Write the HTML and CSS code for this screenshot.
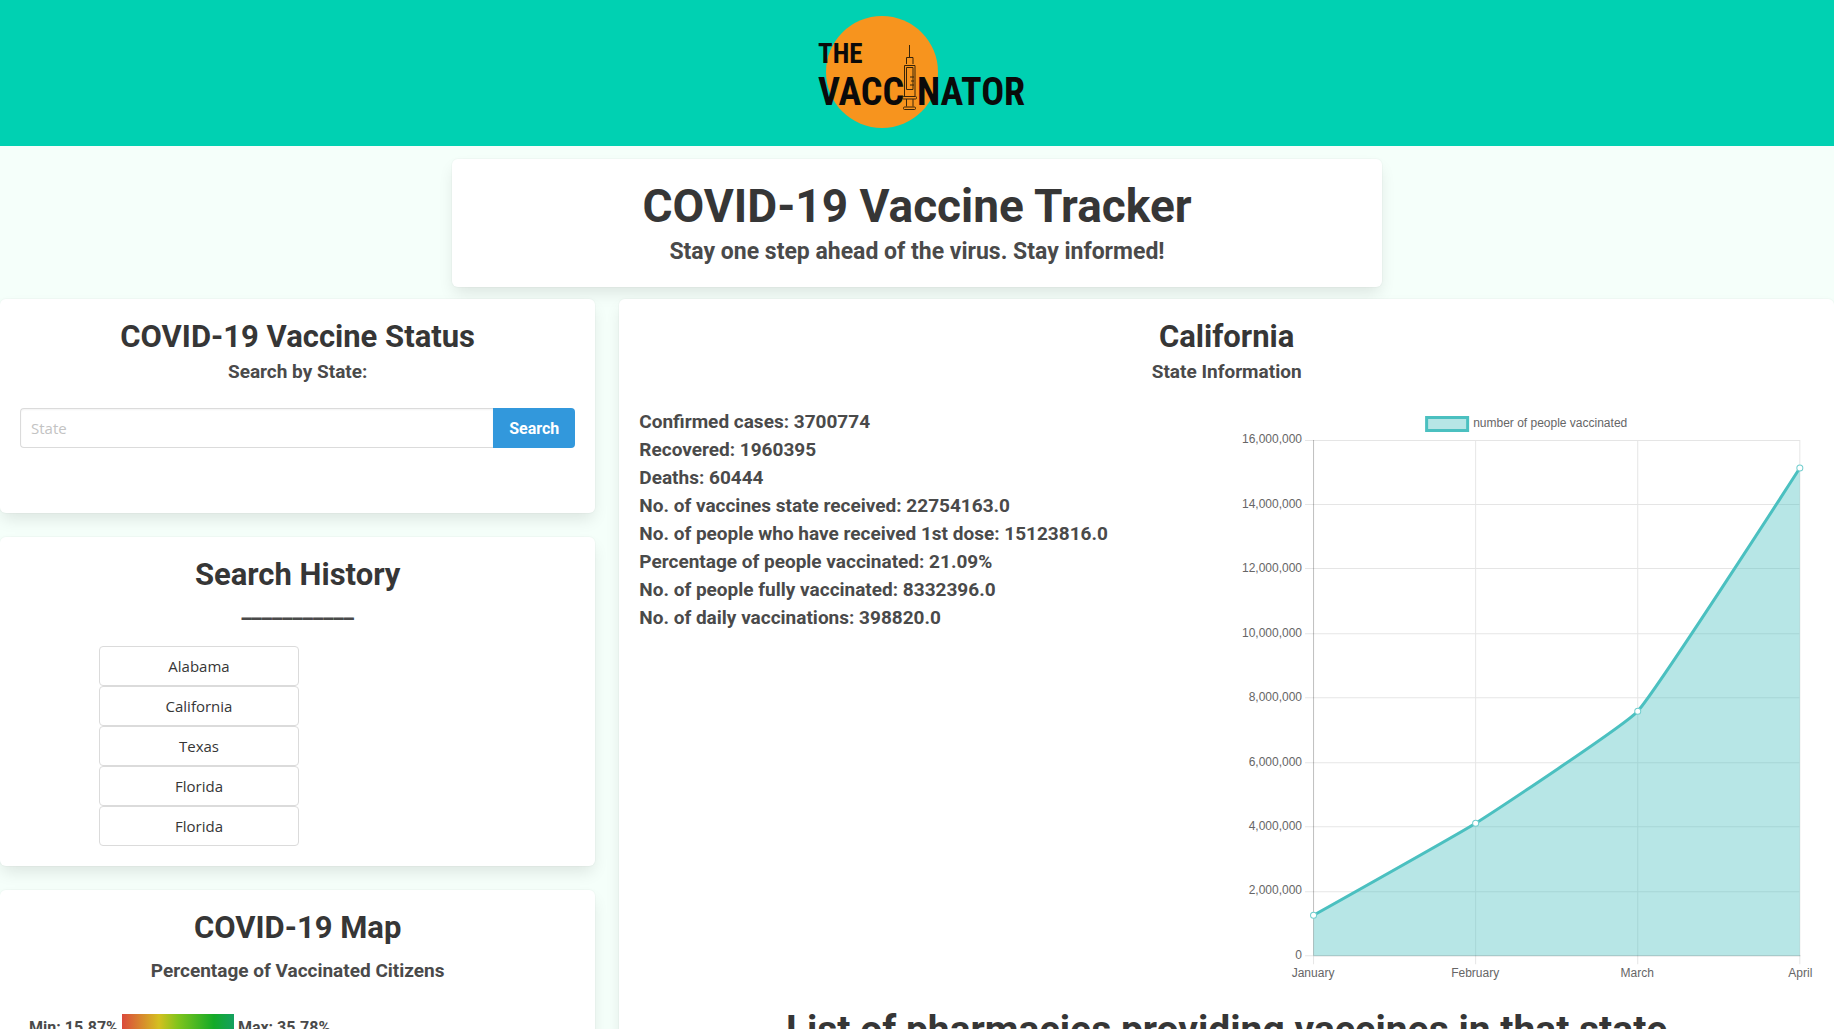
FILE: index.html
```html
<!DOCTYPE html>
<html lang="en">
<head>
<meta charset="utf-8">
<meta name="viewport" content="width=device-width, initial-scale=1">
<title>The Vaccinator</title>
<link rel="stylesheet" href="styles.css">
</head>
<body>
<header class="banner">
  <svg class="logo" viewBox="-3 0 240 146" role="img" aria-label="The Vaccinator">
    <circle cx="82" cy="72" r="56" fill="#f7941e"/>
    <text class="logo-the" x="18" y="63">THE</text>
    <text class="logo-name" x="18" y="105">VACC</text>
    <text class="logo-name" x="117" y="105">NATOR</text>
    <g class="syringe">
      <path d="M109.500 45V57M106.500 64V57.500H113V64M104.500 96V65.500H115V96M106.500 67.500H113V89.500H106.500ZM110 77H114M111 81H114M110 85H114M106.500 99V106.500M113 99V106.500"/>
      <rect x="102.500" y="96.500" width="14" height="2.500" rx="1"/>
      <rect x="103.500" y="107" width="12" height="2.500" rx="1"/>
    </g>
  </svg>
</header>

<section class="box hero">
  <h1 class="title title-xl">COVID-19 Vaccine Tracker</h1>
  <p class="subtitle subtitle-lg">Stay one step ahead of the virus. Stay informed!</p>
</section>

<main class="columns">
  <div class="sidebar">
    <section class="box">
      <h2 class="title">COVID-19 Vaccine Status</h2>
      <label class="subtitle" for="state">Search by State:</label>
      <form class="search">
        <input class="search-input" id="state" type="text" placeholder="State">
        <button class="search-button" type="button">Search</button>
      </form>
    </section>

    <section class="box">
      <h2 class="title">Search History</h2>
      <p class="subtitle rule">___________</p>
      <div class="history">
        <button class="history-item" type="button">Alabama</button>
        <button class="history-item" type="button">California</button>
        <button class="history-item" type="button">Texas</button>
        <button class="history-item" type="button">Florida</button>
        <button class="history-item" type="button">Florida</button>
      </div>
    </section>

    <section class="box map">
      <h2 class="title">COVID-19 Map</h2>
      <p class="subtitle">Percentage of Vaccinated Citizens</p>
      <div class="scale">
        <span>Min: 15.87%</span>
        <div class="scale-bar"></div>
        <span>Max: 35.78%</span>
      </div>
    </section>
  </div>

  <section class="box results">
    <h2 class="title">California</h2>
    <p class="subtitle">State Information</p>
    <div class="details">
      <ul class="stats">
        <li>Confirmed cases: 3700774</li>
        <li>Recovered: 1960395</li>
        <li>Deaths: 60444</li>
        <li>No. of vaccines state received: 22754163.0</li>
        <li>No. of people who have received 1st dose: 15123816.0</li>
        <li>Percentage of people vaccinated: 21.09%</li>
        <li>No. of people fully vaccinated: 8332396.0</li>
        <li>No. of daily vaccinations: 398820.0</li>
      </ul>
      <svg class="chart" viewBox="0 0 575 576" role="img" aria-label="Number of people vaccinated by month">
        <path class="grid" d="M66 32.500H561M66 96.500H561M66 160.500H561M66 225.500H561M66 289.500H561M66 354.500H561M66 418.500H561M66 483.500H561M236.500 32V556M398.500 32V556M560.500 32V556"/>
        <path class="axis" d="M74.500 32V548M74 547.500H561"/>
        <path class="grid" d="M66 547.500H74M74.500 548V556"/>
        <path class="area" d="M74.500 507C74.500 507 220.800 424.900 236.500 415C253.200 404.500 385.400 317.300 398.500 303C417.800 281.800 560.500 60 560.500 60V547.500H74.500Z"/>
        <path class="line" d="M74.500 507C74.500 507 220.800 424.900 236.500 415C253.200 404.500 385.400 317.300 398.500 303C417.800 281.800 560.500 60 560.500 60"/>
        <g class="points">
          <circle cx="74.500" cy="507" r="3"/>
          <circle cx="236.500" cy="415" r="3"/>
          <circle cx="398.500" cy="303" r="3"/>
          <circle cx="560.500" cy="60" r="3"/>
        </g>
        <rect class="legend" x="187.500" y="9.500" width="41" height="13"/>
        <text class="label" x="234" y="19">number of people vaccinated</text>
        <g class="label label-y">
          <text x="63" y="35">16,000,000</text>
          <text x="63" y="100">14,000,000</text>
          <text x="63" y="164">12,000,000</text>
          <text x="63" y="229">10,000,000</text>
          <text x="63" y="293">8,000,000</text>
          <text x="63" y="358">6,000,000</text>
          <text x="63" y="422">4,000,000</text>
          <text x="63" y="486">2,000,000</text>
          <text x="63" y="551">0</text>
        </g>
        <g class="label label-x">
          <text x="74" y="569">January</text>
          <text x="236" y="569">February</text>
          <text x="398" y="569">March</text>
          <text x="561" y="569">April</text>
        </g>
      </svg>
    </div>
    <h2 class="title title-lg">List of pharmacies providing vaccines in that state</h2>
  </section>
</main>
</body>
</html>
```
FILE: styles.css
```css
* {
  box-sizing: border-box;
  margin: 0;
  padding: 0;
}

body {
  height: 100vh;
  overflow: hidden;
  background: #f5fffa;
  color: #4a4a4a;
  font-family: Roboto, sans-serif;
  font-size: 16px;
}

.banner {
  display: flex;
  justify-content: center;
  background: #00d1b2;
}

.logo {
  width: 240px;
  height: 146px;
}

.logo text {
  fill: #0a0a0a;
  font-family: "Roboto Condensed", Roboto, sans-serif;
  font-weight: 700;
}

.logo-the {
  font-size: 27px;
}

.logo-name {
  font-size: 38px;
}

.syringe {
  fill: none;
  stroke: #3a2508;
  stroke-width: 1;
}

.box {
  padding: 20px;
  border-radius: 6px;
  background: #fff;
  box-shadow: 0 8px 16px -2px rgba(10, 10, 10, 0.1), 0 0 0 1px rgba(10, 10, 10, 0.02);
}

.hero {
  width: calc(50% + 13px);
  margin: 13px auto 12px;
}

.title {
  color: #363636;
  font-size: 31px;
  font-weight: 700;
  line-height: 36px;
  text-align: center;
}

.title-xl {
  font-size: 46px;
  line-height: 54px;
}

.title-lg {
  margin-top: 24px;
  font-size: 39px;
  line-height: 45px;
}

.subtitle {
  display: block;
  margin-top: 4px;
  font-size: 19px;
  font-weight: 700;
  line-height: 25px;
  text-align: center;
}

.subtitle-lg {
  font-size: 23px;
  line-height: 30px;
}

.rule {
  font-size: 23px;
}

.columns {
  display: grid;
  grid-template-columns: calc(33.333% - 16px) minmax(0, 1fr);
  gap: 24px;
}

.sidebar {
  display: flex;
  flex-direction: column;
  gap: 24px;
}

.search {
  display: flex;
  margin: 24px 0 45px;
}

.search-input {
  flex: 1;
  min-width: 0;
  height: 40px;
  padding: 0 10px;
  border: 1px solid #dbdbdb;
  border-right: 0;
  border-radius: 4px 0 0 4px;
  background: #fff;
  box-shadow: inset 0 1px 2px rgba(10, 10, 10, 0.05);
  color: #363636;
  font: 15px "Open Sans", sans-serif;
}

.search-input::placeholder {
  color: #c3c3c3;
}

.search-button {
  height: 40px;
  padding: 0 16px;
  border: 0;
  border-radius: 0 4px 4px 0;
  background: #3298dc;
  color: #fff;
  font: 700 16px Roboto, sans-serif;
}

.history {
  display: flex;
  flex-direction: column;
  width: 200px;
  margin: 24px 0 0 79px;
}

.history-item {
  height: 40px;
  border: 1px solid #dbdbdb;
  border-radius: 4px;
  background: #fff;
  color: #363636;
  font: 15px "Open Sans", sans-serif;
}

.map .subtitle {
  margin-top: 12px;
}

.scale {
  display: flex;
  gap: 4px;
  margin: 31px 0 0 9px;
  font-weight: 700;
  line-height: 28px;
}

.scale-bar {
  width: 112px;
  height: 28px;
  background: linear-gradient(90deg, #db4a3c, #d4c020 33%, #80c41c 50%, #14aa28 82%, #14a060);
}

.details {
  display: grid;
  grid-template-columns: minmax(0, 1fr) minmax(0, 1fr);
  gap: 24px;
  margin-top: 24px;
}

.stats {
  list-style: none;
  font-size: 19px;
  font-weight: 700;
  line-height: 28px;
}

.chart {
  width: 100%;
}

.grid,
.axis {
  fill: none;
  stroke: rgba(0, 0, 0, 0.1);
}

.axis {
  stroke: rgba(0, 0, 0, 0.25);
}

.area {
  fill: rgba(75, 192, 192, 0.4);
}

.line {
  fill: none;
  stroke: #4bc0c0;
  stroke-width: 3;
}

.points {
  fill: #fff;
  stroke: #6fcdcd;
}

.legend {
  fill: #b7e6e6;
  stroke: #4bc0c0;
  stroke-width: 3;
}

.label {
  fill: #666;
  font-family: "Liberation Sans", sans-serif;
  font-size: 12px;
}

.label-y {
  text-anchor: end;
}

.label-x {
  text-anchor: middle;
}
```
